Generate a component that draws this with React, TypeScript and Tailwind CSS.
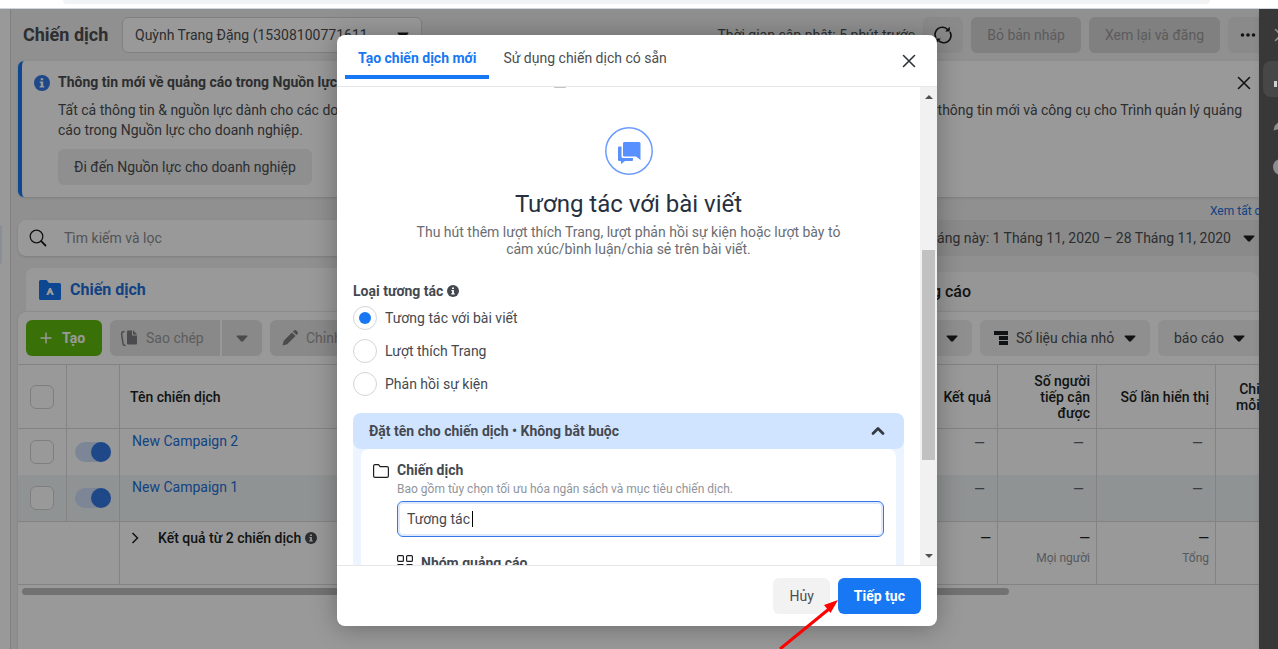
import { useState } from 'react';
import type { ReactNode } from 'react';

type IconProps = { className?: string };

function Caret({ className = '' }: IconProps) {
  return (
    <svg viewBox="0 0 12 7" className={`h-[7px] w-3 shrink-0 ${className}`} fill="currentColor" aria-hidden="true">
      <path d="M1 .5h10q.8.2.3 1L7 6.300q-1 .8-2 0L.7 1.500Q.2.700 1 .5z" />
    </svg>
  );
}

function CloseIcon({ className = '' }: IconProps) {
  return (
    <svg viewBox="0 0 16 16" className={`size-4 ${className}`} fill="none" stroke="currentColor" strokeWidth="1.6" strokeLinecap="round" aria-hidden="true">
      <path d="M2.500 2.500l11 11M13.500 2.500l-11 11" />
    </svg>
  );
}

function InfoIcon({ className = '' }: IconProps) {
  return (
    <svg viewBox="0 0 16 16" className={`shrink-0 ${className}`} aria-hidden="true">
      <circle cx="8" cy="8" r="8" fill="currentColor" />
      <path d="M6.700 3.200h2.500v2H6.700zM5.800 6.600h3.400V11h1v1.500H5.700V11h1.100V8.100h-1z" fill="#fff" />
    </svg>
  );
}

function FolderSolidIcon() {
  return (
    <svg viewBox="0 0 22 20" className="h-5 w-[22px]" aria-hidden="true">
      <path d="M0 1.500A1.500 1.500 0 0 1 1.500 0H7.500l2.500 3h10.500A1.500 1.500 0 0 1 22 4.500v14a1.500 1.500 0 0 1-1.500 1.500h-19A1.500 1.500 0 0 1 0 18.500z" fill="#1877f2" />
      <path d="M10.200 8h1.800l3 7h-2.200l-1.700-2.500L9.400 15H7.200z" fill="#fff" />
    </svg>
  );
}

function RefreshIcon() {
  return (
    <svg viewBox="0 0 18 18" className="size-[18px]" fill="none" stroke="#1c1e21" strokeWidth="1.700" aria-hidden="true">
      <path d="M2 12A7.200 7.200 0 0 1 13.500 3.500M16 6A7.200 7.200 0 0 1 4.500 14.500" />
      <path d="M15.800.8v4.700h-4.700zM2.200 17.200v-4.700h4.700z" fill="#1c1e21" stroke="none" />
    </svg>
  );
}

function SearchIcon() {
  return (
    <svg viewBox="0 0 18 18" className="size-[18px]" fill="none" stroke="#1c1e21" strokeWidth="1.300" strokeLinecap="round" aria-hidden="true">
      <circle cx="7.500" cy="7.500" r="6.300" />
      <path d="M12.200 12.200l4.300 4.300" strokeWidth="1.800" />
    </svg>
  );
}

function CopyIcon() {
  return (
    <svg viewBox="0 0 18 18" className="size-[18px]" fill="currentColor" aria-hidden="true">
      <path d="M8 1.500h4V6.500h5v8a1 1 0 0 1-1 1H8a1 1 0 0 1-1-1v-12a1 1 0 0 1 1-1z" />
      <path d="M13 1l4 4.500h-4z" />
      <path d="M4.500 2.500c-2.500 0-3 1-2.800 3l1.300 9c.2 1.500.8 2 2.500 2" fill="none" stroke="currentColor" strokeWidth="1.500" />
    </svg>
  );
}

function PencilIcon({ className = '' }: IconProps) {
  return (
    <svg viewBox="0 0 16 16" className={`size-4 shrink-0 ${className}`} fill="currentColor" aria-hidden="true">
      <path d="M.5 15.500l1.200-4.700L10 2.500l3.500 3.500-8.300 8.300zM11 1.500l.8-.8a2 2 0 0 1 2.800 0l.7.7a2 2 0 0 1 0 2.800l-.8.8z" />
    </svg>
  );
}

function BreakdownIcon() {
  return (
    <svg viewBox="0 0 14 14" className="size-[14px]" fill="#1c1e21" aria-hidden="true">
      <path d="M0 0h14v4H0zM5 5h9v4H5zM5 10h9v4H5z" />
    </svg>
  );
}

function ChatIcon() {
  return (
    <svg viewBox="0 0 48 48" className="size-12" aria-hidden="true">
      <circle cx="24" cy="24" r="23.200" fill="none" stroke="#6d9cff" strokeWidth="1.500" />
      <path d="M20 15h14a1.500 1.500 0 0 1 1.500 1.500V33L31 29.500H19a1 1 0 0 1-1-1V16.500A1.500 1.500 0 0 1 20 15z" fill="#5890ff" />
      <path d="M16.500 19.500H14a1 1 0 0 0-1 1V33a1 1 0 0 0 1 1h2v3l4-3h7a1 1 0 0 0 1-1v-2H18a1.500 1.500 0 0 1-1.500-1.500z" fill="#5890ff" />
    </svg>
  );
}

function FolderIcon() {
  return (
    <svg viewBox="0 0 16 16" className="size-4 shrink-0" fill="none" stroke="#1c1e21" strokeWidth="1.200" aria-hidden="true">
      <path d="M.6 3A1.400 1.400 0 0 1 2 1.600h3.500l1.600 2H14A1.400 1.400 0 0 1 15.400 5v8a1.400 1.400 0 0 1-1.400 1.400H2A1.400 1.400 0 0 1 .6 13z" />
    </svg>
  );
}

function GridIcon() {
  return (
    <svg viewBox="0 0 16 16" className="size-4 shrink-0" fill="none" stroke="#1c1e21" strokeWidth="1.200" aria-hidden="true">
      <rect x=".6" y=".6" width="5.800" height="5.800" rx="1" />
      <rect x="9.600" y=".6" width="5.800" height="5.800" rx="1" />
      <rect x=".6" y="9.600" width="5.800" height="5.800" rx="1" />
      <rect x="9.600" y="9.600" width="5.800" height="5.800" rx="1" />
    </svg>
  );
}

function BrowserBar() {
  return (
    <div className="h-[9px] shrink-0 border-b border-gray-300 bg-white pr-[68px] pl-[63px]">
      <div className="h-1 rounded-b-full bg-[#f1f3f4]" />
    </div>
  );
}

function TopBar() {
  return (
    <header className="flex items-center px-3 py-2">
      <h1 className="w-[99px] shrink-0 text-lg leading-5 font-bold text-[#4b4d50]">Chiến dịch</h1>
      <button type="button" className="flex h-9 w-[300px] shrink-0 items-center justify-between rounded-md border border-[#d5d5d5] bg-white px-3 text-[#4b4d50]">
        Quỳnh Trang Đặng (15308100771611...
        <Caret className="text-[#1c1e21]" />
      </button>
      <span className="mr-2 ml-auto shrink-0 text-[#4b4d50]">Thời gian cập nhật: 5 phút trước</span>
      <div className="flex shrink-0 gap-2">
        <button type="button" aria-label="Làm mới" className="flex h-9 w-10 items-center justify-center rounded-md bg-[#e6e6e6]">
          <RefreshIcon />
        </button>
        <button type="button" className="h-9 rounded-md bg-[#d5d5d5] px-4 text-[#9a9a9c]">Bỏ bản nháp</button>
        <button type="button" className="h-9 rounded-md bg-[#d5d5d5] px-4 text-[#9a9a9c]">Xem lại và đăng</button>
        <button type="button" aria-label="Thêm" className="-mr-3 flex h-9 w-[31px] items-center rounded-l-md bg-[#e6e6e6] pl-3">
          <svg viewBox="0 0 16 4" className="h-1 w-4" fill="#1c1e21" aria-hidden="true">
            <circle cx="2.500" cy="2" r="1.800" />
            <circle cx="8" cy="2" r="1.800" />
            <circle cx="13.500" cy="2" r="1.800" />
          </svg>
        </button>
      </div>
    </header>
  );
}

function Notice() {
  return (
    <section className="ml-[7px] flex gap-2 rounded-l-md border-l-4 border-[#1877f2] bg-white pt-[11px] pr-[7px] pb-3 pl-3 text-[#4b4d50] shadow-sm">
      <InfoIcon className="mt-[3px] size-4 text-[#3578e5]" />
      <div className="min-w-0 flex-1">
        <h2 className="leading-5 font-bold">Thông tin mới về quảng cáo trong Nguồn lực cho doanh nghiệp</h2>
        <div className="mt-2 leading-5 whitespace-nowrap">
          <p className="flex justify-between pr-[10px]">
            <span>Tất cả thông tin &amp; nguồn lực dành cho các doanh nghiệp</span>
            <span>thông tin mới và công cụ cho Trình quản lý quảng</span>
          </p>
          <p>cáo trong Nguồn lực cho doanh nghiệp.</p>
        </div>
        <button type="button" className="mt-[9px] h-9 rounded-md bg-[#eeeeee] px-4">Đi đến Nguồn lực cho doanh nghiệp</button>
      </div>
      <button type="button" aria-label="Đóng" className="mt-[3px] -ml-6 h-4 text-[#1c1e21]">
        <CloseIcon />
      </button>
    </section>
  );
}

function ToolButton({ children, className = '' }: { children: ReactNode; className?: string }) {
  return (
    <button type="button" className={`flex h-9 shrink-0 items-center ${className}`}>
      {children}
    </button>
  );
}

function Toolbar() {
  return (
    <div className="flex justify-between p-2">
      <div className="flex gap-2">
        <ToolButton className="w-[76px] gap-2 rounded-md bg-[#60bd0e] pl-3 font-bold text-white">
          <svg viewBox="0 0 16 16" className="size-4" stroke="#fff" strokeWidth="1.500" aria-hidden="true">
            <path d="M8 2.500v11M2.500 8h11" />
          </svg>
          Tạo
        </ToolButton>
        <div className="flex gap-[2px]">
          <ToolButton className="w-[110px] gap-2 rounded-l-md bg-[#e5e5e5] pl-[10px] text-[#9a9a9c]">
            <span className="text-[#7d7d80]"><CopyIcon /></span>
            Sao chép
          </ToolButton>
          <ToolButton className="w-10 justify-center rounded-r-md bg-[#e5e5e5] text-[#7d7d80]">
            <Caret />
          </ToolButton>
        </div>
        <ToolButton className="w-[130px] gap-2 rounded-md bg-[#e5e5e5] pl-3 text-[#9a9a9c]">
          <PencilIcon className="text-[#7d7d80]" />
          Chỉnh sửa
        </ToolButton>
      </div>
      <div className="-mr-2 flex gap-2 text-[#4b4d50]">
        <ToolButton className="w-24 justify-end rounded-md bg-[#eeeeee] pr-[14px] text-[#1c1e21]">
          <Caret />
        </ToolButton>
        <ToolButton className="w-[170px] justify-between rounded-md bg-[#eeeeee] px-[14px]">
          <span className="flex items-center gap-2">
            <BreakdownIcon />
            Số liệu chia nhỏ
          </span>
          <Caret className="text-[#1c1e21]" />
        </ToolButton>
        <ToolButton className="w-[101px] justify-between rounded-l-md bg-[#eeeeee] pr-[14px] pl-4">
          báo cáo
          <Caret className="text-[#1c1e21]" />
        </ToolButton>
      </div>
    </div>
  );
}

const CAMPAIGNS = ['New Campaign 2', 'New Campaign 1'];

function Checkbox({ label }: { label: string }) {
  return <input type="checkbox" aria-label={label} className="block size-6 appearance-none rounded-md border border-[#d3d3d3] bg-white" />;
}

function Toggle({ label }: { label: string }) {
  return (
    <label className="ml-2 flex h-5 w-9 justify-end rounded-full bg-[#d0e0fb]">
      <input type="checkbox" role="switch" defaultChecked aria-label={label} className="size-5 appearance-none rounded-full bg-[#3578e5]" />
    </label>
  );
}

function CampaignTable() {
  const cell = 'border-r border-b border-[#dadada]';
  return (
    <table className="w-full table-fixed border-separate border-spacing-0 border-t border-[#dadada] text-[#1c1e21]">
      <colgroup>
        <col className="w-[49px]" />
        <col className="w-[53px]" />
        <col />
        <col className="w-[120px]" />
        <col className="w-[99px]" />
        <col className="w-[119px]" />
        <col className="w-[43px]" />
      </colgroup>
      <thead>
        <tr className="h-16 leading-4">
          <th className={`${cell} pl-3`}><Checkbox label="Chọn tất cả" /></th>
          <th className={cell} aria-label="Trạng thái" />
          <th className={`${cell} pl-[10px] text-left font-medium`}>Tên chiến dịch</th>
          <th className={`${cell} pr-[6px] text-right font-medium`}>Kết quả</th>
          <th className={`${cell} pr-[6px] pl-6 text-right font-medium`}>Số người tiếp cận được</th>
          <th className={`${cell} pr-[6px] text-right font-medium whitespace-nowrap`}>Số lần hiển thị</th>
          <th className="overflow-hidden border-b border-[#dadada] pl-5 font-medium whitespace-nowrap">
            <div className="w-fit text-right">
              Chi phí
              <br />
              mỗi kết
            </div>
          </th>
        </tr>
      </thead>
      <tbody>
        {CAMPAIGNS.map((name, i) => {
          const last = i === CAMPAIGNS.length - 1;
          const line = last ? 'border-b' : '';
          const col = `border-[#dadada] border-r ${line}`;
          return (
            <tr key={name} className={last ? 'h-[47px] bg-[#f1f5f5]' : 'h-[46px]'}>
              <td className={`${col} pl-3`}><Checkbox label={name} /></td>
              <td className={col}><Toggle label={name} /></td>
              <td className={`${col} pt-[2px] pl-3 align-top`}>
                <a href="#campaign" className="leading-5 text-[#216fdb]">{name}</a>
              </td>
              <td className={`${col} pt-1 pr-3 text-right align-top leading-5 text-[#606770]`}>—</td>
              <td className={`${col} pt-1 pr-3 text-right align-top leading-5 text-[#606770]`}>—</td>
              <td className={`${col} pt-1 pr-3 text-right align-top leading-5 text-[#606770]`}>—</td>
              <td className={`border-[#dadada] ${line}`} />
            </tr>
          );
        })}
        <tr className="h-[63px]">
          <td colSpan={2} className={cell} />
          <td className={`${cell} pt-[6px] pl-[9px] align-top font-medium`}>
            <div className="flex items-center leading-5">
              <svg viewBox="0 0 12 12" className="mr-[17px] size-3" fill="none" stroke="currentColor" strokeWidth="1.500" aria-hidden="true">
                <path d="M3.500 1l5 5-5 5" />
              </svg>
              Kết quả từ 2 chiến dịch
              <InfoIcon className="ml-1 size-3 text-[#4b4d50]" />
            </div>
          </td>
          <td className={`${cell} pt-[6px] pr-[6px] text-right align-top leading-5 font-medium`}>—</td>
          <td className={`${cell} pt-[6px] pr-[6px] text-right align-top leading-5`}>
            <span className="font-medium">—</span>
            <div className="text-xs leading-5 text-[#90949c]">Mọi người</div>
          </td>
          <td className={`${cell} pt-[6px] pr-[6px] text-right align-top leading-5`}>
            <span className="font-medium">—</span>
            <div className="text-xs leading-5 text-[#90949c]">Tổng</div>
          </td>
          <td className="border-b border-[#dadada]" />
        </tr>
      </tbody>
    </table>
  );
}

function AdsManager() {
  return (
    <main className="flex min-w-0 flex-1 flex-col overflow-hidden border-l border-[#d5d5d5] bg-[#f0f0f0]">
      <TopBar />
      <Notice />
      <div className="mt-[5px] flex h-[18px] justify-end overflow-hidden text-xs leading-[18px]">
        <a href="#all" className="w-[49px] shrink-0 overflow-hidden whitespace-nowrap text-[#216fdb]">Xem tất cả</a>
      </div>
      <div className="ml-[7px] flex h-9">
        <label className="flex flex-1 items-center gap-[17px] rounded-l-lg bg-white pl-[11px] shadow-sm">
          <SearchIcon />
          <input type="text" aria-label="Tìm kiếm và lọc" placeholder="Tìm kiếm và lọc" className="flex-1 outline-none placeholder:text-[#8a8d91]" />
        </label>
        <button type="button" className="flex w-[370px] items-center justify-end gap-3 bg-[#e6e6e6] pr-1 text-[#4b4d50]">
          Tháng này: 1 Tháng 11, 2020 – 28 Tháng 11, 2020
          <Caret className="text-[#1c1e21]" />
        </button>
      </div>
      <div className="mt-3 ml-[15px] flex h-[43px] items-end justify-between text-base font-bold">
        <button type="button" className="flex h-[43px] w-[400px] items-center gap-[9px] rounded-tl-lg bg-white pl-[13px] text-[#216fdb]">
          <FolderSolidIcon />
          Chiến dịch
        </button>
        <button type="button" className="h-[39px] flex-1 rounded-tr-lg bg-[#fafafa] font-medium text-[#1c1e21]">
          <span className="block w-[545px] text-right">Quảng cáo</span>
        </button>
      </div>
      <section className="ml-[7px] flex-1 rounded-tl-lg border-t border-[#e9e9e9] bg-white shadow-sm">
        <Toolbar />
        <CampaignTable />
        <div className="mt-[3px] mr-[250px] ml-1 h-[7px] rounded-full bg-[#bfbfbf]" />
      </section>
    </main>
  );
}

function SideRail() {
  return (
    <aside className="relative z-20 w-[19px] shrink-0 overflow-hidden bg-[#383838] text-[#8a8d91] shadow-md">
      <div className="mt-[18px] ml-[14px] h-4 w-4">
        <CloseIcon />
      </div>
      <div className="mt-[18px] ml-1 flex h-9 w-10 items-end rounded-lg bg-[#474747] pb-[10px] pl-[11px]">
        <span className="h-[6px] w-[3px] bg-[#d0d0d0]" />
      </div>
      <PencilIcon className="mt-[18px] ml-[14px]" />
      <div className="mt-7 ml-[14px] size-4 rounded-full bg-[#8a8d91]" />
    </aside>
  );
}

const ENGAGEMENT_TYPES = ['Tương tác với bài viết', 'Lượt thích Trang', 'Phản hồi sự kiện'];

function ModalBody() {
  const [type, setType] = useState(ENGAGEMENT_TYPES[0]);
  return (
    <div className="flex min-h-0 flex-1">
      <div className="min-w-0 flex-1 overflow-hidden px-4">
        <div className="mx-auto flex h-10 w-[150px]">
          <span className="h-px w-3 rounded-b-full bg-[#c4c4c4]" />
        </div>
        <div className="flex flex-col items-center text-center">
          <ChatIcon />
          <h2 className="mt-[13px] text-2xl leading-8 text-[#263040]">Tương tác với bài viết</h2>
          <p className="mt-1 w-[450px] leading-[17px] text-[#6a6d72]">
            Thu hút thêm lượt thích Trang, lượt phản hồi sự kiện hoặc lượt bày tỏ cảm xúc/bình luận/chia sẻ trên bài viết.
          </p>
        </div>
        <fieldset className="mt-[23px] text-[#444950]">
          <legend className="flex h-5 items-center gap-1 font-bold">
            Loại tương tác
            <InfoIcon className="size-3" />
          </legend>
          <div className="mt-[5px] flex flex-col gap-[9px]">
            {ENGAGEMENT_TYPES.map((t) => (
              <label key={t} className="flex items-center gap-2">
                <input
                  type="radio"
                  name="engagement"
                  checked={type === t}
                  onChange={() => setType(t)}
                  className="flex size-6 appearance-none items-center justify-center rounded-full border border-[#d3d5d8] bg-white checked:before:size-3 checked:before:rounded-full checked:before:bg-[#1877f2]"
                />
                {t}
              </label>
            ))}
          </div>
        </fieldset>
        <section className="mt-[17px] rounded-lg bg-[#ebf4ff] px-2 text-[#444950]">
          <button type="button" className="-mx-2 flex h-9 w-[calc(100%+16px)] items-center justify-between rounded-lg bg-[#d1e4ff] px-4 font-bold">
            Đặt tên cho chiến dịch • Không bắt buộc
            <svg viewBox="0 0 20 16" className="h-4 w-5" fill="none" stroke="#343a40" strokeWidth="2.800" strokeLinecap="round" strokeLinejoin="round" aria-hidden="true">
              <path d="M5 10.500l5-5 5 5" />
            </svg>
          </button>
          <div className="rounded-lg bg-white px-3 pt-[11px] pb-3">
            <div className="flex gap-2">
              <div className="mt-[3px]"><FolderIcon /></div>
              <div className="min-w-0 flex-1">
                <label htmlFor="campaign-name" className="block leading-5 font-bold">Chiến dịch</label>
                <p className="text-xs leading-[18px] text-[#90949c]">Bao gồm tùy chọn tối ưu hóa ngân sách và mục tiêu chiến dịch.</p>
                <div className="mt-[3px] flex h-9 items-center rounded-md border border-[#3578e5] bg-white pl-[9px] ring-2 ring-[#dfe9fb] ring-inset">
                  <input id="campaign-name" type="text" defaultValue="Tương tác" className="w-[65px] outline-none" />
                  <span className="h-4 w-px bg-black" />
                </div>
                <div className="mt-4 flex h-5 items-center gap-2">
                  <GridIcon />
                  <span className="font-bold">Nhóm quảng cáo</span>
                </div>
              </div>
            </div>
          </div>
        </section>
      </div>
      <div className="flex w-[17px] shrink-0 flex-col items-center bg-[#f1f1f1] text-[#505050]">
        <svg viewBox="0 0 8 4" className="mt-2 h-1 w-2" fill="currentColor" aria-hidden="true"><path d="M4 0l4 4H0z" /></svg>
        <div className="mt-[151px] h-[210px] w-[13px] bg-[#c1c1c1]" />
        <svg viewBox="0 0 8 4" className="mt-auto mb-[7px] h-1 w-2" fill="currentColor" aria-hidden="true"><path d="M0 0h8L4 4z" /></svg>
      </div>
    </div>
  );
}

function CreateCampaignModal() {
  return (
    <div role="dialog" aria-modal="true" aria-label="Tạo chiến dịch mới" className="flex w-[600px] flex-col overflow-hidden rounded-lg bg-white shadow-[0_2px_26px_rgba(0,0,0,0.3)]">
      <div className="flex h-[52px] shrink-0 border-b border-gray-200 px-2">
        <button type="button" className="h-[44px] border-b-4 border-[#1877f2] px-[13px] pt-[6px] font-bold text-[#1877f2]">Tạo chiến dịch mới</button>
        <button type="button" className="h-[44px] border-b-4 border-transparent px-[14px] pt-[6px] text-[#4b4d50]">Sử dụng chiến dịch có sẵn</button>
        <button type="button" aria-label="Đóng" className="mt-[10px] mr-3 ml-auto h-8 text-[#303338]">
          <CloseIcon />
        </button>
      </div>
      <ModalBody />
      <div className="flex h-[61px] shrink-0 items-center justify-end gap-2 border-t border-gray-200 px-4">
        <button type="button" className="h-9 rounded-md bg-[#f2f2f2] px-4 text-[#4b4d50]">Hủy</button>
        <button type="button" className="h-9 rounded-md bg-[#1877f2] px-4 font-bold text-white">Tiếp tục</button>
      </div>
    </div>
  );
}

export default function App() {
  return (
    <div className="flex h-screen flex-col overflow-hidden font-['Roboto',sans-serif] text-sm">
      <BrowserBar />
      <div className="relative flex min-h-0 flex-1">
        <nav className="w-[10px] shrink-0 bg-white pt-[216px]">
          <div className="h-[39px] w-[2px] rounded-r bg-[#e7effa]" />
        </nav>
        <AdsManager />
        <SideRail />
        <div className="absolute inset-0 z-10 flex justify-center bg-black/40 pt-[26px] pr-1 pb-[23px]">
          <CreateCampaignModal />
          {/* pointer to the continue button */}
          <svg viewBox="0 0 60 50" className="absolute bottom-0 left-1/2 ml-[140px] h-[50px] w-[60px]" aria-hidden="true">
            <path d="M1 50L50 10" stroke="#f00" strokeWidth="3" />
            <path d="M59 1L51.500 14 45 6z" fill="#f00" />
          </svg>
        </div>
      </div>
    </div>
  );
}
